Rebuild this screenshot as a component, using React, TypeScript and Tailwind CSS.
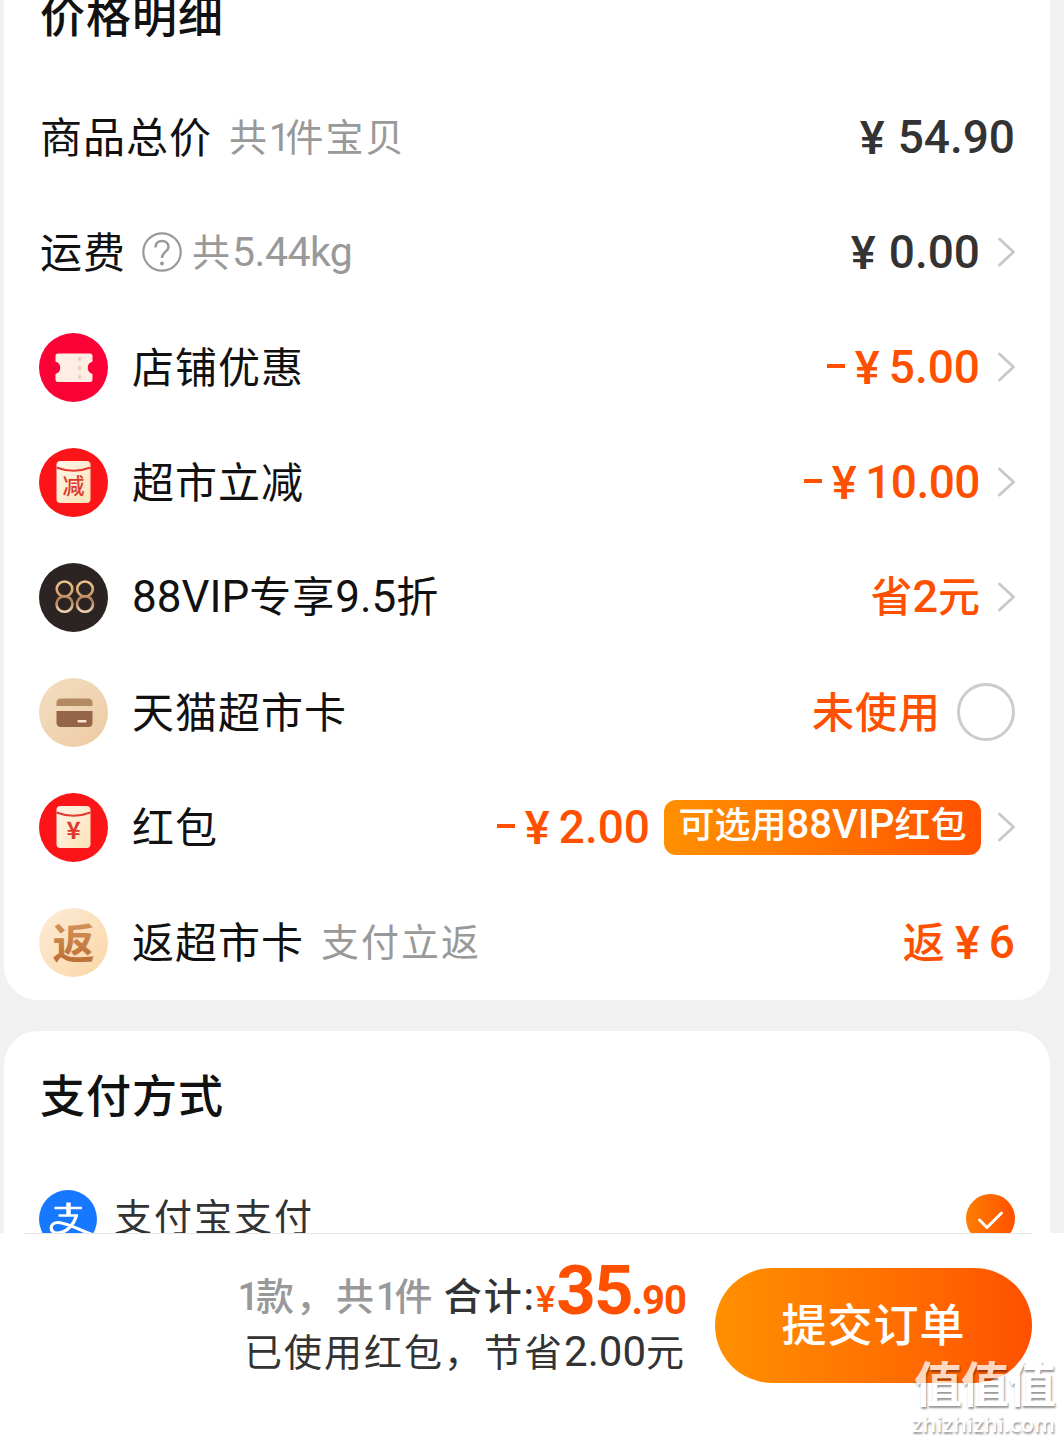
import React from 'react';

const Arrow: React.FC = () => (
  <svg className="w-[18px] h-[30px] ml-[17px] mb-[1px] shrink-0" viewBox="0 0 18 30" fill="none">
    <path d="M2.5 2L16.5 15L2.5 28" stroke="#c8c8c8" strokeWidth="2.8" strokeLinecap="round" strokeLinejoin="round" />
  </svg>
);

const CouponIcon: React.FC = () => (
  <svg className="w-[69px] h-[69px]" viewBox="0 0 69 69">
    <circle cx="34.5" cy="34.5" r="34.5" fill="#fb0237" />
    <path d="M19 20.5H51Q53.5 20.5 53.5 23V28.5A6.5 6.5 0 0 0 53.5 41V46.5Q53.5 49 51 49H19Q16.5 49 16.5 46.5V41A6.5 6.5 0 0 0 16.5 28.5V23Q16.5 20.5 19 20.5Z" fill="#fdeee4" />
    <path d="M40.5 24V46.5" stroke="#f3cdbd" strokeWidth="3" strokeDasharray="4 5" />
  </svg>
);

const PacketIcon: React.FC<{ mark: string; size: number; weight: number }> = ({ mark, size, weight }) => (
  <svg className="w-[69px] h-[69px]" viewBox="0 0 69 69">
    <defs>
      <linearGradient id="packet" x1="0" y1="0" x2="1" y2="1">
        <stop offset="0" stopColor="#fff5ea" />
        <stop offset="1" stopColor="#fbe3b6" />
      </linearGradient>
    </defs>
    <circle cx="34.5" cy="34.5" r="34.5" fill="#fb1519" />
    <rect x="17.5" y="13" width="34" height="42" rx="4" fill="url(#packet)" />
    <path d="M17.5 19.5Q34.5 26 51.5 19.5" stroke="#e63a30" strokeWidth="2" fill="none" />
    <text x="34.5" y="46" textAnchor="middle" fontSize={size} fontWeight={weight} fill="#dc3a2c" fontFamily="'Noto Sans CJK SC', sans-serif">
      {mark}
    </text>
  </svg>
);

const VipIcon: React.FC = () => (
  <svg className="w-[69px] h-[69px]" viewBox="0 0 69 69">
    <defs>
      <linearGradient id="vip" gradientUnits="userSpaceOnUse" x1="0" y1="17" x2="0" y2="50">
        <stop offset="0" stopColor="#f0c48a" />
        <stop offset="0.4" stopColor="#d9a470" />
        <stop offset="0.6" stopColor="#b07c55" />
        <stop offset="1" stopColor="#f8dcba" />
      </linearGradient>
    </defs>
    <circle cx="34.5" cy="34.5" r="34.5" fill="#2b2423" />
    <g fill="none" stroke="url(#vip)" strokeWidth="2.6">
      <ellipse cx="25.5" cy="26" rx="7.8" ry="7.5" />
      <ellipse cx="25.5" cy="41" rx="8" ry="7.8" />
      <ellipse cx="46" cy="26" rx="7.8" ry="7.5" />
      <ellipse cx="46" cy="41" rx="8" ry="7.8" />
    </g>
  </svg>
);

const CardIcon: React.FC = () => (
  <svg className="w-[69px] h-[69px]" viewBox="0 0 69 69">
    <defs>
      <linearGradient id="sand" x1="0" y1="0" x2="1" y2="1">
        <stop offset="0" stopColor="#f3dfc2" />
        <stop offset="1" stopColor="#eccaa2" />
      </linearGradient>
    </defs>
    <circle cx="34.5" cy="34.5" r="34.5" fill="url(#sand)" />
    <path d="M17.5 28V25Q17.5 20.5 22 20.5H49Q53.5 20.5 53.5 25V28Z" fill="#b48a62" />
    <path d="M17.5 33H53.5V44.5Q53.5 49 49 49H22Q17.5 49 17.5 44.5Z" fill="#956547" />
    <rect x="38.5" y="42" width="9" height="2.5" rx="1" fill="#fbe6d4" />
  </svg>
);

const RebateIcon: React.FC = () => (
  <svg className="w-[69px] h-[69px]" viewBox="0 0 69 69">
    <defs>
      <linearGradient id="peach" x1="0" y1="0" x2="1" y2="1">
        <stop offset="0" stopColor="#fdebd9" />
        <stop offset="1" stopColor="#fbd6a4" />
      </linearGradient>
      <linearGradient id="bronze" x1="0" y1="0" x2="0" y2="1">
        <stop offset="0" stopColor="#d99d63" />
        <stop offset="1" stopColor="#b8682f" />
      </linearGradient>
    </defs>
    <circle cx="34.5" cy="34.5" r="34.5" fill="url(#peach)" />
    <text x="34.5" y="50.5" textAnchor="middle" fontSize="42" fontWeight="700" fill="url(#bronze)" fontFamily="'Noto Sans CJK SC', sans-serif">
      返
    </text>
  </svg>
);

const AlipayIcon: React.FC = () => (
  <svg className="w-[58px] h-[58px] -ml-px mr-[17px] mt-[2px]" viewBox="0 0 58 58" fill="none">
    <defs>
      <clipPath id="alipay">
        <circle cx="29" cy="29" r="29" />
      </clipPath>
    </defs>
    <circle cx="29" cy="29" r="29" fill="#1677ff" />
    <g clipPath="url(#alipay)" stroke="#fff">
      <path d="M29.5 12.5V26" strokeWidth="4.5" />
      <path d="M15.5 18H43M19.5 25.500H39" strokeWidth="2.6" />
      <path d="M37.5 25C35 35 27 43 18.500 43C10 43 10 32.500 19 32.500C28 32.500 42 41 60 47" strokeWidth="3.2" />
    </g>
  </svg>
);

interface RowProps {
  icon?: React.ReactNode;
  label: React.ReactNode;
  children: React.ReactNode;
}

const Row: React.FC<RowProps> = ({ icon, label, children }) => (
  <div className="flex items-center justify-between h-[115px]">
    <div className="flex items-center">
      {icon && <div className="w-[69px] h-[69px] -ml-px mr-6 shrink-0">{icon}</div>}
      <div className="flex items-center text-[42px] tracking-[1px] text-[#111]">{label}</div>
    </div>
    <div className="flex items-center">{children}</div>
  </div>
);

const Price: React.FC<{ minus?: boolean; gap?: boolean; value: string }> = ({ minus, gap, value }) => (
  <div className="flex items-center pb-[1px] font-['Roboto'] font-medium text-[46px]">
    {minus && <span className="w-[18px] h-[4px] mr-[10px] mb-[2px] bg-current" />}
    <span className={gap ? 'text-[47px] mr-[13px]' : 'text-[47px] mr-[9px]'}>¥</span>
    <span>{value}</span>
  </div>
);

export default function App() {
  return (
    <div className="relative w-[1064px] h-[1442px] overflow-hidden bg-white font-['Roboto','Noto_Sans_CJK_SC',sans-serif] leading-none whitespace-nowrap">
      <div className="h-[1233px] overflow-hidden bg-[#f1f1f1] pl-1 pr-[14px]">
        <section className="h-[1000px] rounded-b-[34px] bg-white pl-9 pr-[35px]">
          <div className="h-[80px]">
            <h2 className="text-[45px] leading-[36px] tracking-[1px] font-medium text-[#111]">价格明细</h2>
          </div>

          <Row
            label={
              <>
                <span className="pt-[2px]">商品总价</span>
                <span className="ml-[17px] text-[38px] tracking-[2px] text-[#999]">
                  共<span className="tracking-[-5px]">1</span>件宝贝
                </span>
              </>
            }
          >
            <div className="text-[#333]">
              <Price gap value="54.90" />
            </div>
          </Row>
          <Row
            label={
              <>
                <span className="pt-[2px]">运费</span>
                <svg className="w-10 h-10 ml-4 mr-[10px] mb-[2px]" viewBox="0 0 40 40" fill="none" stroke="#999" strokeWidth="2.2">
                  <circle cx="20" cy="20" r="18.7" />
                  <path d="M13.5 15.5C13.5 11 16.5 9 20 9C23.8 9 26.5 11.5 26.5 15C26.5 19.5 20 20 20 26" strokeWidth="2.6" />
                  <circle cx="20" cy="31.5" r="2" fill="#999" stroke="none" />
                </svg>
                <span className="text-[38px] tracking-[2px] text-[#999]">
                  共<span className="text-[41px] tracking-[-0.5px]">5.44kg</span>
                </span>
              </>
            }
          >
            <div className="text-[#333]">
              <Price gap value="0.00" />
            </div>
            <Arrow />
          </Row>
          <Row icon={<CouponIcon />} label={<span className="pt-[2px]">店铺优惠</span>}>
            <div className="text-[#ff5000]">
              <Price minus value="5.00" />
            </div>
            <Arrow />
          </Row>
          <Row icon={<PacketIcon mark="减" size={22} weight={500} />} label={<span className="pt-[2px]">超市立减</span>}>
            <div className="text-[#ff5000] tracking-[-0.5px]">
              <Price minus value="10.00" />
            </div>
            <Arrow />
          </Row>
          <Row
            icon={<VipIcon />}
            label={
              <span className="pb-[1px]">
                <span className="text-[44px] tracking-[0px]">88VIP</span>专享<span className="text-[44px] tracking-[0px]">9.5</span>折
              </span>
            }
          >
            <span className="pb-[2px] text-[42px] font-medium text-[#ff5000]">
              省<span className="text-[45px]">2</span>元
            </span>
            <Arrow />
          </Row>
          <Row icon={<CardIcon />} label={<span className="pt-[2px]">天猫超市卡</span>}>
            <span className="pt-[2px] text-[42px] tracking-[1px] font-medium text-[#ff5000]">未使用</span>
            <span className="w-[58px] h-[58px] ml-[16px] mb-[1px] rounded-full border-[3px] border-[#ccc]" />
          </Row>
          <Row icon={<PacketIcon mark="¥" size={24} weight={700} />} label={<span className="pt-[2px]">红包</span>}>
            <div className="text-[#ff5000]">
              <Price minus value="2.00" />
            </div>
            <div className="flex justify-center w-[317px] h-[55px] ml-[14px] -mr-px rounded-[12px] bg-linear-to-r from-[#ff9000] to-[#ff5000] text-white text-[36px] leading-[49px] font-medium">
              <span>
                可选用<span className="text-[40px]">88VIP</span>红包
              </span>
            </div>
            <Arrow />
          </Row>
          <Row
            icon={<RebateIcon />}
            label={
              <>
                <span className="pt-[2px]">返超市卡</span>
                <span className="ml-[17px] text-[38px] tracking-[2px] text-[#999]">支付立返</span>
              </>
            }
          >
            <div className="flex items-center text-[#ff5000]">
              <span className="mr-[10px] pt-[2px] text-[42px] font-medium">返</span>
              <Price value="6" />
            </div>
          </Row>
        </section>

        <section className="h-[300px] mt-[31px] rounded-t-[34px] bg-white pl-9 pr-[35px]">
          <h2 className="h-[132px] text-[45px] leading-[134px] tracking-[1px] font-medium text-[#111]">支付方式</h2>
          <div className="flex items-center justify-between h-[110px]">
            <div className="flex items-center">
              <AlipayIcon />
              <span className="text-[38px] tracking-[2px] text-[#333]">支付宝支付</span>
            </div>
            <div className="w-[49px] h-[49px] rounded-full bg-linear-to-r from-[#ff7d00] to-[#ff5000]">
              <svg className="w-[49px] h-[49px]" viewBox="0 0 49 49" fill="none">
                <path d="M13.5 26L21 33.5L35.5 19" stroke="#fff" strokeWidth="3" strokeLinecap="round" strokeLinejoin="round" />
              </svg>
            </div>
          </div>
        </section>
      </div>

      <footer className="flex justify-end h-[209px] pl-6 pr-8 bg-white">
        <div className="flex flex-1 justify-end border-t border-[#e8e8e8]">
          <div className="flex flex-col items-end pt-[25px] mr-[29px]">
            <div className="h-[64px] text-[38px] font-medium leading-[64px]">
              <span className="align-[4px] text-[#999]">
                <span className="tracking-[-3px]">1</span>
                <span className="tracking-[2px]">款，共</span>
                <span className="tracking-[-3px]">1</span>件
              </span>
              <span className="ml-[11px] align-[4px] tracking-[2px] text-[#333]">合计:</span>
              <span className="text-[37px] tracking-[-1px] align-[2px] text-[#ff5000]">¥</span>
              <span className="ml-[2px] text-[69px] tracking-[-2px] font-bold text-[#ff5000]">35</span>
              <span className="text-[40px] tracking-[-1px] font-bold text-[#ff5000]">.90</span>
            </div>
            <div className="h-[56px] text-[38px] leading-[58px] tracking-[2px] text-[#333]">
              已使用红包，节省<span className="text-[42px] tracking-[0px]">2.00</span>元
            </div>
          </div>
          <button className="w-[317px] h-[115px] mt-[34px] pt-[2px] rounded-full bg-linear-to-r from-[#ff9000] to-[#ff5000] text-white text-[45px] tracking-[1px] font-medium">
            提交订单
          </button>
        </div>
      </footer>

      <div className="absolute right-[9px] top-[1361px] flex flex-col items-end text-white opacity-75 [text-shadow:1px_2px_2px_rgba(0,0,0,0.55)]">
        <span className="text-[48px] leading-[50px] tracking-[-1px] font-bold">值值值</span>
        <span className="font-['Open_Sans'] text-[22px] leading-[24px] font-semibold">zhizhizhi.com</span>
      </div>
    </div>
  );
}
